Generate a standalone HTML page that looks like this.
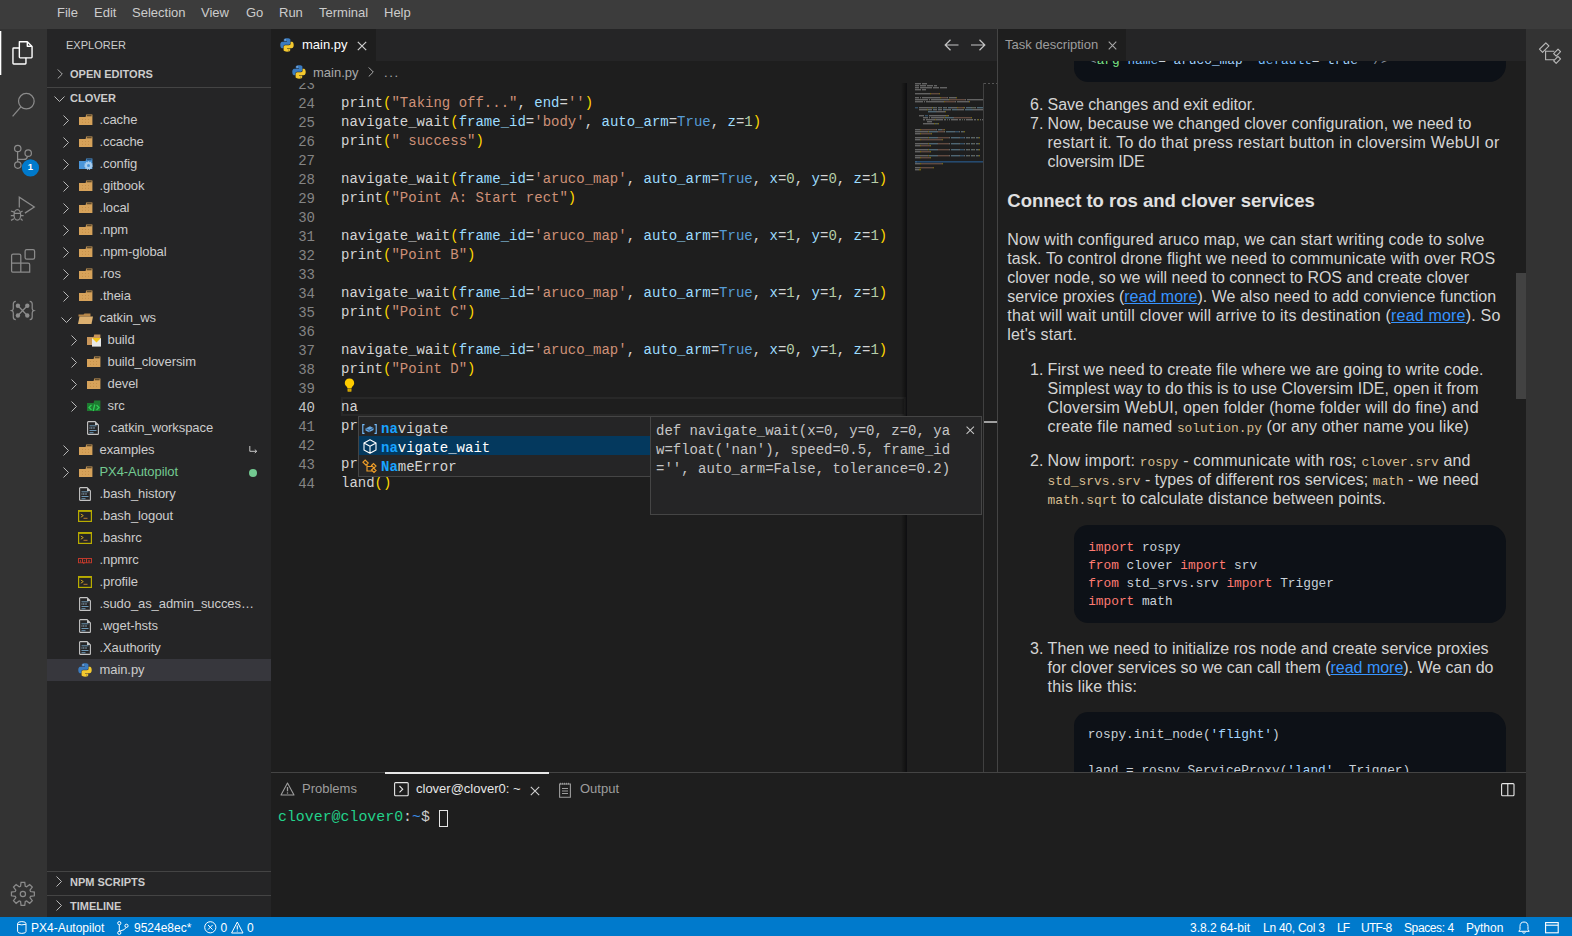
<!DOCTYPE html>
<html><head><meta charset="utf-8">
<style>
*{margin:0;padding:0;box-sizing:border-box}
html,body{width:1572px;height:936px;overflow:hidden;background:#1e1e1e;font-family:"Liberation Sans",sans-serif;color:#cccccc}
.a{position:absolute}
.mono{font-family:"Liberation Mono",monospace}
#menubar{left:0;top:0;width:1572px;height:29px;background:#3c3c3c}
#menubar span{position:absolute;top:5px;font-size:13px;color:#cccccc;line-height:16px}
#act{left:0;top:29px;width:47px;height:888px;background:#333333}
#side{left:47px;top:29px;width:224px;height:888px;background:#252526}
#editor{left:271px;top:29px;width:726px;height:743px;background:#1e1e1e}
#tabbar{left:271px;top:29px;width:726px;height:32px;background:#252526;overflow:hidden}
#rpanel{left:997px;top:29px;width:529px;height:743px;background:#1e1e1e;overflow:hidden}
#ract{left:1526px;top:29px;width:46px;height:888px;background:#333333}
#bottom{left:271px;top:772px;width:1255px;height:145px;background:#1e1e1e;border-top:1px solid #444}
#status{left:0;top:917px;width:1572px;height:19px;background:#007acc;color:#fff;font-size:12px}
.row{position:absolute;left:0;width:224px;height:22px;font-size:13px;line-height:22px;color:#cccccc;white-space:nowrap;letter-spacing:-0.08px}
.code{position:absolute;left:341px;margin-top:1px;font-size:14px;line-height:19px;white-space:pre;color:#d4d4d4;font-family:"Liberation Mono",monospace}
.ln{position:absolute;left:271px;margin-top:2px;width:44px;text-align:right;font-size:14px;line-height:19px;color:#858585;font-family:"Liberation Mono",monospace}
.s{color:#ce9178}.p{color:#9cdcfe}.k{color:#569cd6}.n{color:#b5cea8}.b{color:#ffd700}
.ml{position:absolute;white-space:pre;font-size:16px;line-height:19px;color:#d4d4d4}
.ml code{font-family:"Liberation Mono",monospace;font-size:12.9px;color:#d8bf92;letter-spacing:0}
.cb{background:#0d1117;border-radius:14px 17px 17px 14px}
.cbt{position:absolute;white-space:pre;font-family:"Liberation Mono",monospace;font-size:12.8px;line-height:18px;color:#c9d1d9}
.kw{color:#ff7b72}
</style></head><body>
<div id="menubar" class="a">
<span style="left:57px">File</span><span style="left:94px">Edit</span><span style="left:132px">Selection</span><span style="left:201px">View</span><span style="left:246px">Go</span><span style="left:279px">Run</span><span style="left:319px">Terminal</span><span style="left:384px">Help</span>
</div>
<div id="act" class="a"></div>
<svg class="a" style="left:0;top:0" width="47" height="936" viewBox="0 0 47 936" fill="none">
<rect x="0" y="31" width="1.3" height="44" fill="#ffffff"/>
<g stroke="#ffffff" stroke-width="1.4" stroke-linejoin="round">
<path d="M19.35,41.75 H27.3 L32.05,46.5 V57.1 Q32.05,57.85 31.3,57.85 H20.1 Q19.35,57.85 19.35,57.1 V42.5 Q19.35,41.75 20.1,41.75 Z"/>
<path d="M27.3,42 V46.3 H31.8" />
<path d="M19.35,47.95 H13.7 Q12.95,47.95 12.95,48.7 V63.2 Q12.95,63.95 13.7,63.95 H25.2 Q25.95,63.95 25.95,63.2 V57.85"/>
</g>
<g stroke="#8b8b8b" stroke-width="1.25">
<circle cx="26.35" cy="101.2" r="7.8"/>
<path d="M20.8,106.9 L12.6,116.3"/>
<circle cx="17.75" cy="148.5" r="3.2"/>
<circle cx="28.2" cy="153.15" r="3.2"/>
<circle cx="17.8" cy="165.1" r="3.2"/>
<path d="M17.6,151.7 V161.9 M17.6,159.4 H24 Q27,159.4 27.5,156.3"/>
<path d="M19.3,207.6 V197.2 L34.3,207.1 L24.9,213.1"/>
<ellipse cx="17.35" cy="214.9" rx="3.3" ry="5.2"/>
<path d="M14,213.3 H20.7 M11,211 L14.2,212.2 M22.6,211 L20.5,212.2 M10.8,215.6 H14 M20.7,215.6 H23.6 M11,220.4 L14,218.8 M22.6,220.4 L20.7,218.8"/>
<path d="M13.1,254.2 H19.2 Q20.8,254.2 20.8,255.8 V263.2 H28.1 Q29.7,263.2 29.7,264.8 V272 H12.6 Q11.6,272 11.6,271 V255.8 Q11.6,254.2 13.1,254.2 Z M11.6,263.2 H20.8 V272"/>
<rect x="25.1" y="249.6" width="9.5" height="9.5" rx="1.6"/>
<path d="M15.8,301.3 Q13.3,301.5 13.3,304 V308.5 Q13.3,310.2 11.7,310.7 Q13.3,311.2 13.3,313 V317 Q13.3,319.6 15.8,319.7 M29.7,301.3 Q32.2,301.5 32.2,304 V308.5 Q32.2,310.2 33.8,310.7 Q32.2,311.2 32.2,313 V317 Q32.2,319.6 29.7,319.7 M17.9,305.7 L27.3,315.5 M27.3,305.7 L17.9,315.5"/>
<path d="M20.54,886.26 L21.05,882.45 L24.75,882.45 L25.26,886.26 L26.63,886.82 L29.69,884.50 L32.30,887.11 L29.98,890.17 L30.54,891.54 L34.35,892.05 L34.35,895.75 L30.54,896.26 L29.98,897.63 L32.30,900.69 L29.69,903.30 L26.63,900.98 L25.26,901.54 L24.75,905.35 L21.05,905.35 L20.54,901.54 L19.17,900.98 L16.11,903.30 L13.50,900.69 L15.82,897.63 L15.26,896.26 L11.45,895.75 L11.45,892.05 L15.26,891.54 L15.82,890.17 L13.50,887.11 L16.11,884.50 L19.17,886.82 Z"/>
<circle cx="22.9" cy="893.9" r="2.6"/>
</g>
<g fill="#8b8b8b"><circle cx="17.9" cy="305.7" r="2.2"/><circle cx="27.3" cy="305.7" r="2.2"/><circle cx="17.9" cy="315.5" r="2.2"/><circle cx="27.3" cy="315.5" r="2.2"/></g>
<circle cx="30.45" cy="167.9" r="8.6" fill="#007acc"/>
</svg>
<div class="a" style="left:22px;top:161px;width:17px;text-align:center;font-size:9.5px;line-height:12px;font-weight:bold;color:#fff">1</div>
<svg width="0" height="0" style="position:absolute">
<defs>
<symbol id="i-folder" viewBox="0 0 14 11"><path d="M0,3 H6.6 L7.2,0.4 H13.4 V11 H0 Z" fill="#d6a25a"/><path d="M7.8,1.2 H12.6 V2.2 H7.6 Z" fill="#3a3020"/><g fill="#c08a45"><circle cx="3.5" cy="5.5" r=".5"/><circle cx="6.5" cy="5.5" r=".5"/><circle cx="9.5" cy="5.5" r=".5"/><circle cx="3.5" cy="8.3" r=".5"/><circle cx="6.5" cy="8.3" r=".5"/><circle cx="9.5" cy="8.3" r=".5"/></g></symbol>
<symbol id="i-folderopen" viewBox="0 0 15 11"><path d="M0.5,1.5 H5.5 L6.5,0.5 H12.5 V3.5 H0.5 Z" fill="#b8884a"/><path d="M0,11 L1.5,3.5 H15 L13.5,11 Z" fill="#dcb070"/></symbol>
<symbol id="i-file" viewBox="0 0 12 14"><path d="M1.3,0.6 H8 L11.4,4 V12.7 Q11.4,13.4 10.7,13.4 H1.3 Q0.6,13.4 0.6,12.7 V1.3 Q0.6,0.6 1.3,0.6 Z" fill="none" stroke="#c5c5c5" stroke-width="1.1"/><path d="M8,0.6 V4 H11.4" fill="#c5c5c5"/><g stroke="#6c96b4" stroke-width="1"><path d="M2.5,4.8 H9.5 M2.5,9.5 H9.5 M2.5,11.7 H6.5"/></g><path d="M2.5,7 H8" stroke="#7a8fa0" stroke-width="1.6" stroke-dasharray="1 .6"/></symbol>
<symbol id="i-shell" viewBox="0 0 14 12"><rect x="0.6" y="0.6" width="12.8" height="10.8" fill="none" stroke="#b8ac00" stroke-width="1.2"/><rect x="0.6" y="0.6" width="12.8" height="1.3" fill="#b8ac00"/><path d="M2.8,4 L5.3,5.6 L2.8,7.2" fill="none" stroke="#c9a020" stroke-width="1"/><path d="M5.5,8.3 H9.5" stroke="#b87a30" stroke-width="1"/></symbol>
<symbol id="i-npm" viewBox="0 0 14 6"><rect x="0" y="0" width="14" height="5.2" fill="#c0392b"/><g fill="#262626"><rect x="1" y="1" width="3" height="3.3"/><rect x="5" y="1" width="3" height="3.3"/><rect x="9" y="1" width="4" height="3.3"/></g><g fill="#c0392b"><rect x="2.1" y="1.9" width=".8" height="2.4"/><rect x="6.1" y="1.9" width=".8" height="1.5"/><rect x="10.1" y="1.9" width=".6" height="2.4"/><rect x="11.4" y="1.9" width=".6" height="2.4"/></g><rect x="5" y="4.2" width="1.5" height="1.5" fill="#c0392b"/></symbol>
<symbol id="i-py" viewBox="0 0 14 14"><path d="M6.9,0.3 C3.6,0.3 3.8,1.7 3.8,1.7 V3.3 H7 V3.8 H2.5 C2.5,3.8 0.3,3.5 0.3,7 C0.3,10.4 2.2,10.3 2.2,10.3 H3.4 V8.6 C3.4,8.6 3.3,6.7 5.3,6.7 H8.6 C8.6,6.7 10.4,6.7 10.4,4.9 V1.9 C10.4,1.9 10.7,0.3 6.9,0.3 Z" fill="#3b7bbf"/><path d="M7.1,13.7 C10.4,13.7 10.2,12.3 10.2,12.3 V10.7 H7 V10.2 H11.5 C11.5,10.2 13.7,10.5 13.7,7 C13.7,3.6 11.8,3.7 11.8,3.7 H10.6 V5.4 C10.6,5.4 10.7,7.3 8.7,7.3 H5.4 C5.4,7.3 3.6,7.3 3.6,9.1 V12.1 C3.6,12.1 3.3,13.7 7.1,13.7 Z" fill="#f4c92f"/><circle cx="5.2" cy="1.9" r=".6" fill="#bcd"/><circle cx="8.8" cy="12.1" r=".6" fill="#887030"/></symbol>
<symbol id="i-chev" viewBox="0 0 6 11"><path d="M0.5,0.5 L5.5,5.5 L0.5,10.5" fill="none" stroke="#c0c0c0" stroke-width="0.95"/></symbol>
<symbol id="i-chevd" viewBox="0 0 11 6"><path d="M0.5,0.5 L5.5,5.5 L10.5,0.5" fill="none" stroke="#c0c0c0" stroke-width="0.95"/></symbol>
</defs></svg>
<div id="side" class="a">
<div class="a" style="left:19px;top:10px;font-size:11px;line-height:13px;color:#cccccc">EXPLORER</div>
<svg class="a" style="left:9.6px;top:39.5px" width="6" height="10"><use href="#i-chev"/></svg>
<div class="a" style="left:23px;top:39px;font-size:11px;line-height:13px;font-weight:bold;color:#cccccc">OPEN EDITORS</div>
<div class="a" style="left:0;top:58px;width:224px;height:1px;background:#444444"></div>
<svg class="a" style="left:7px;top:66.5px" width="11" height="6"><use href="#i-chevd"/></svg>
<div class="a" style="left:23px;top:63px;font-size:11px;line-height:13px;font-weight:bold;color:#cccccc">CLOVER</div>
<div class="row" style="top:80px;"><svg class="a" style="left:16.299999999999997px;top:5.7px" width="6" height="11"><use href="#i-chev"/></svg><svg class="a" style="left:32px;top:5.3px" width="14" height="11"><use href="#i-folder"/></svg><span class="a" style="left:52.5px;top:0;color:#cccccc">.cache</span></div>
<div class="row" style="top:102px;"><svg class="a" style="left:16.299999999999997px;top:5.7px" width="6" height="11"><use href="#i-chev"/></svg><svg class="a" style="left:32px;top:5.3px" width="14" height="11"><use href="#i-folder"/></svg><span class="a" style="left:52.5px;top:0;color:#cccccc">.ccache</span></div>
<div class="row" style="top:124px;"><svg class="a" style="left:16.299999999999997px;top:5.7px" width="6" height="11"><use href="#i-chev"/></svg><svg class="a" style="left:32px;top:5px" width="15" height="12" viewBox="0 0 15 12"><path d="M0,3 H6.6 L7.2,0.4 H13.4 V11 H0 Z" fill="#4a95d8"/><path d="M7.8,1.2 H12.6 V2.2 H7.6 Z" fill="#1e3a5a"/><circle cx="9.5" cy="7.6" r="3.6" fill="#a8cdee" stroke="#a8cdee" stroke-width="1.4" stroke-dasharray="1 1"/><circle cx="9.5" cy="7.6" r="1.5" fill="#4a95d8"/></svg><span class="a" style="left:52.5px;top:0;color:#cccccc">.config</span></div>
<div class="row" style="top:146px;"><svg class="a" style="left:16.299999999999997px;top:5.7px" width="6" height="11"><use href="#i-chev"/></svg><svg class="a" style="left:32px;top:5.3px" width="14" height="11"><use href="#i-folder"/></svg><span class="a" style="left:52.5px;top:0;color:#cccccc">.gitbook</span></div>
<div class="row" style="top:168px;"><svg class="a" style="left:16.299999999999997px;top:5.7px" width="6" height="11"><use href="#i-chev"/></svg><svg class="a" style="left:32px;top:5.3px" width="14" height="11"><use href="#i-folder"/></svg><span class="a" style="left:52.5px;top:0;color:#cccccc">.local</span></div>
<div class="row" style="top:190px;"><svg class="a" style="left:16.299999999999997px;top:5.7px" width="6" height="11"><use href="#i-chev"/></svg><svg class="a" style="left:32px;top:5.3px" width="14" height="11"><use href="#i-folder"/></svg><span class="a" style="left:52.5px;top:0;color:#cccccc">.npm</span></div>
<div class="row" style="top:212px;"><svg class="a" style="left:16.299999999999997px;top:5.7px" width="6" height="11"><use href="#i-chev"/></svg><svg class="a" style="left:32px;top:5.3px" width="14" height="11"><use href="#i-folder"/></svg><span class="a" style="left:52.5px;top:0;color:#cccccc">.npm-global</span></div>
<div class="row" style="top:234px;"><svg class="a" style="left:16.299999999999997px;top:5.7px" width="6" height="11"><use href="#i-chev"/></svg><svg class="a" style="left:32px;top:5.3px" width="14" height="11"><use href="#i-folder"/></svg><span class="a" style="left:52.5px;top:0;color:#cccccc">.ros</span></div>
<div class="row" style="top:256px;"><svg class="a" style="left:16.299999999999997px;top:5.7px" width="6" height="11"><use href="#i-chev"/></svg><svg class="a" style="left:32px;top:5.3px" width="14" height="11"><use href="#i-folder"/></svg><span class="a" style="left:52.5px;top:0;color:#cccccc">.theia</span></div>
<div class="row" style="top:278px;"><svg class="a" style="left:13.8px;top:9.5px" width="11" height="6"><use href="#i-chevd"/></svg><svg class="a" style="left:30.5px;top:5.5px" width="15" height="11"><use href="#i-folderopen"/></svg><span class="a" style="left:52.5px;top:0;color:#cccccc">catkin_ws</span></div>
<div class="row" style="top:300px;"><svg class="a" style="left:24.299999999999997px;top:5.7px" width="6" height="11"><use href="#i-chev"/></svg><svg class="a" style="left:40px;top:4.5px" width="14" height="13" viewBox="0 0 14 13"><path d="M0,3 H6.6 L7.2,0.4 H13.4 V11 H0 Z" fill="#c9965a"/><path d="M5,4 H14 V12.6 H5 Z" fill="#e8e8e8"/><path d="M5,4 L9.5,8.5 L14,4 Z" fill="#f5c518"/></svg><span class="a" style="left:60.5px;top:0;color:#cccccc">build</span></div>
<div class="row" style="top:322px;"><svg class="a" style="left:24.299999999999997px;top:5.7px" width="6" height="11"><use href="#i-chev"/></svg><svg class="a" style="left:40px;top:5.3px" width="14" height="11"><use href="#i-folder"/></svg><span class="a" style="left:60.5px;top:0;color:#cccccc">build_cloversim</span></div>
<div class="row" style="top:344px;"><svg class="a" style="left:24.299999999999997px;top:5.7px" width="6" height="11"><use href="#i-chev"/></svg><svg class="a" style="left:40px;top:5.3px" width="14" height="11"><use href="#i-folder"/></svg><span class="a" style="left:60.5px;top:0;color:#cccccc">devel</span></div>
<div class="row" style="top:366px;"><svg class="a" style="left:24.299999999999997px;top:5.7px" width="6" height="11"><use href="#i-chev"/></svg><svg class="a" style="left:40px;top:5px" width="14" height="13" viewBox="0 0 14 13"><path d="M0,3 H6.6 L7.2,0.4 H13.4 V11 H0 Z" fill="#1e7a30"/><path d="M4.5,5 L2,7.5 L4.5,10 M9.5,5 L12,7.5 L9.5,10 M7.8,4.5 L6.2,11" fill="none" stroke="#2fcc55" stroke-width="1.3"/></svg><span class="a" style="left:60.5px;top:0;color:#cccccc">src</span></div>
<div class="row" style="top:388px;"><svg class="a" style="left:40px;top:4px" width="12" height="14"><use href="#i-file"/></svg><span class="a" style="left:60.5px;top:0;color:#cccccc">.catkin_workspace</span></div>
<div class="row" style="top:410px;"><svg class="a" style="left:16.299999999999997px;top:5.7px" width="6" height="11"><use href="#i-chev"/></svg><svg class="a" style="left:32px;top:5.3px" width="14" height="11"><use href="#i-folder"/></svg><span class="a" style="left:52.5px;top:0;color:#cccccc">examples</span><svg class="a" style="left:202px;top:7px" width="9" height="8" viewBox="0 0 9 8"><path d="M0.8,0 V5.3 H7.5 M5.8,3.6 L7.8,5.3 L5.8,7" fill="none" stroke="#c5c5c5" stroke-width="1"/></svg></div>
<div class="row" style="top:432px;"><svg class="a" style="left:16.299999999999997px;top:5.7px" width="6" height="11"><use href="#i-chev"/></svg><svg class="a" style="left:32px;top:5.3px" width="14" height="11"><use href="#i-folder"/></svg><span class="a" style="left:52.5px;top:0;color:#73c991">PX4-Autopilot</span><div class="a" style="left:201.6px;top:7.7px;width:8.4px;height:8.4px;border-radius:50%;background:#73c991"></div></div>
<div class="row" style="top:454px;"><svg class="a" style="left:32px;top:4px" width="12" height="14"><use href="#i-file"/></svg><span class="a" style="left:52.5px;top:0;color:#cccccc">.bash_history</span></div>
<div class="row" style="top:476px;"><svg class="a" style="left:31px;top:5.2px" width="14" height="12"><use href="#i-shell"/></svg><span class="a" style="left:52.5px;top:0;color:#cccccc">.bash_logout</span></div>
<div class="row" style="top:498px;"><svg class="a" style="left:31px;top:5.2px" width="14" height="12"><use href="#i-shell"/></svg><span class="a" style="left:52.5px;top:0;color:#cccccc">.bashrc</span></div>
<div class="row" style="top:520px;"><svg class="a" style="left:31px;top:8.7px" width="14" height="6"><use href="#i-npm"/></svg><span class="a" style="left:52.5px;top:0;color:#cccccc">.npmrc</span></div>
<div class="row" style="top:542px;"><svg class="a" style="left:31px;top:5.2px" width="14" height="12"><use href="#i-shell"/></svg><span class="a" style="left:52.5px;top:0;color:#cccccc">.profile</span></div>
<div class="row" style="top:564px;"><svg class="a" style="left:32px;top:4px" width="12" height="14"><use href="#i-file"/></svg><span class="a" style="left:52.5px;top:0;color:#cccccc">.sudo_as_admin_succes…</span></div>
<div class="row" style="top:586px;"><svg class="a" style="left:32px;top:4px" width="12" height="14"><use href="#i-file"/></svg><span class="a" style="left:52.5px;top:0;color:#cccccc">.wget-hsts</span></div>
<div class="row" style="top:608px;"><svg class="a" style="left:32px;top:4px" width="12" height="14"><use href="#i-file"/></svg><span class="a" style="left:52.5px;top:0;color:#cccccc">.Xauthority</span></div>
<div class="row" style="top:630px;background:#37373d;"><svg class="a" style="left:31px;top:4px" width="14" height="14"><use href="#i-py"/></svg><span class="a" style="left:52.5px;top:0;color:#cccccc">main.py</span></div>
<div class="a" style="left:0;top:842px;width:224px;height:1px;background:#444444"></div>
<svg class="a" style="left:9.3px;top:847px" width="6" height="11"><use href="#i-chev"/></svg>
<div class="a" style="left:23px;top:847px;font-size:11px;line-height:13px;font-weight:bold;color:#cccccc">NPM SCRIPTS</div>
<div class="a" style="left:0;top:866px;width:224px;height:1px;background:#444444"></div>
<svg class="a" style="left:9.3px;top:871px" width="6" height="11"><use href="#i-chev"/></svg>
<div class="a" style="left:23px;top:871px;font-size:11px;line-height:13px;font-weight:bold;color:#cccccc">TIMELINE</div>
</div>
<div id="editor" class="a"></div>
<div id="tabbar" class="a">
<div class="a" style="left:0;top:0;width:105px;height:32px;background:#1e1e1e"></div>
<svg class="a" style="left:9px;top:9px" width="14" height="14"><use href="#i-py"/></svg>
<span class="a" style="left:31px;top:8px;font-size:13px;line-height:16px;color:#ffffff">main.py</span>
<svg class="a" style="left:85.5px;top:11.7px" width="10" height="10" viewBox="0 0 10 10"><path d="M0.8,0.8 L9.2,9.2 M9.2,0.8 L0.8,9.2" stroke="#d0d0d0" stroke-width="1.2"/></svg>
<svg class="a" style="left:673px;top:10px" width="16" height="12" viewBox="0 0 16 12"><path d="M1,6 H14.5 M6.5,0.8 L1.2,6 L6.5,11.2" fill="none" stroke="#c5c5c5" stroke-width="1.2"/></svg>
<svg class="a" style="left:699px;top:10px" width="16" height="12" viewBox="0 0 16 12"><path d="M1,6 H14.5 M9.5,0.8 L14.8,6 L9.5,11.2" fill="none" stroke="#c5c5c5" stroke-width="1.2"/></svg>
</div>
<div class="a" style="left:271px;top:61px;width:726px;height:22px;background:#1e1e1e">
<svg class="a" style="left:21px;top:4px" width="14" height="14"><use href="#i-py"/></svg>
<span class="a" style="left:42px;top:4px;font-size:13px;line-height:16px;color:#a9a9a9">main.py</span>
<svg class="a" style="left:97px;top:6px" width="6" height="10"><use href="#i-chev"/></svg>
<span class="a" style="left:113px;top:4px;font-size:13px;line-height:16px;color:#a9a9a9;letter-spacing:1.6px">...</span>
</div>
<div class="a" style="left:0;top:83px;width:997px;height:689px;overflow:hidden">
<div class="a" style="left:341px;top:314px;width:565px;height:19px;border:2px solid #282828"></div>
<div class="ln" style="top:-9px">23</div>
<div class="ln" style="top:10px">24</div>
<div class="code" style="top:10px">print<span class="b">(</span><span class="s">&quot;Taking off...&quot;</span>, <span class="p">end</span>=<span class="s">&#x27;&#x27;</span><span class="b">)</span></div>
<div class="ln" style="top:29px">25</div>
<div class="code" style="top:29px">navigate_wait<span class="b">(</span><span class="p">frame_id</span>=<span class="s">&#x27;body&#x27;</span>, <span class="p">auto_arm</span>=<span class="k">True</span>, <span class="p">z</span>=<span class="n">1</span><span class="b">)</span></div>
<div class="ln" style="top:48px">26</div>
<div class="code" style="top:48px">print<span class="b">(</span><span class="s">&quot; success&quot;</span><span class="b">)</span></div>
<div class="ln" style="top:67px">27</div>
<div class="ln" style="top:86px">28</div>
<div class="code" style="top:86px">navigate_wait<span class="b">(</span><span class="p">frame_id</span>=<span class="s">&#x27;aruco_map&#x27;</span>, <span class="p">auto_arm</span>=<span class="k">True</span>, <span class="p">x</span>=<span class="n">0</span>, <span class="p">y</span>=<span class="n">0</span>, <span class="p">z</span>=<span class="n">1</span><span class="b">)</span></div>
<div class="ln" style="top:105px">29</div>
<div class="code" style="top:105px">print<span class="b">(</span><span class="s">&quot;Point A: Start rect&quot;</span><span class="b">)</span></div>
<div class="ln" style="top:124px">30</div>
<div class="ln" style="top:143px">31</div>
<div class="code" style="top:143px">navigate_wait<span class="b">(</span><span class="p">frame_id</span>=<span class="s">&#x27;aruco_map&#x27;</span>, <span class="p">auto_arm</span>=<span class="k">True</span>, <span class="p">x</span>=<span class="n">1</span>, <span class="p">y</span>=<span class="n">0</span>, <span class="p">z</span>=<span class="n">1</span><span class="b">)</span></div>
<div class="ln" style="top:162px">32</div>
<div class="code" style="top:162px">print<span class="b">(</span><span class="s">&quot;Point B&quot;</span><span class="b">)</span></div>
<div class="ln" style="top:181px">33</div>
<div class="ln" style="top:200px">34</div>
<div class="code" style="top:200px">navigate_wait<span class="b">(</span><span class="p">frame_id</span>=<span class="s">&#x27;aruco_map&#x27;</span>, <span class="p">auto_arm</span>=<span class="k">True</span>, <span class="p">x</span>=<span class="n">1</span>, <span class="p">y</span>=<span class="n">1</span>, <span class="p">z</span>=<span class="n">1</span><span class="b">)</span></div>
<div class="ln" style="top:219px">35</div>
<div class="code" style="top:219px">print<span class="b">(</span><span class="s">&quot;Point C&quot;</span><span class="b">)</span></div>
<div class="ln" style="top:238px">36</div>
<div class="ln" style="top:257px">37</div>
<div class="code" style="top:257px">navigate_wait<span class="b">(</span><span class="p">frame_id</span>=<span class="s">&#x27;aruco_map&#x27;</span>, <span class="p">auto_arm</span>=<span class="k">True</span>, <span class="p">x</span>=<span class="n">0</span>, <span class="p">y</span>=<span class="n">1</span>, <span class="p">z</span>=<span class="n">1</span><span class="b">)</span></div>
<div class="ln" style="top:276px">38</div>
<div class="code" style="top:276px">print<span class="b">(</span><span class="s">&quot;Point D&quot;</span><span class="b">)</span></div>
<div class="ln" style="top:295px">39</div>
<div class="ln" style="top:314px;color:#c6c6c6">40</div>
<div class="code" style="top:314px">na</div>
<div class="ln" style="top:333px">41</div>
<div class="code" style="top:333px">pr</div>
<div class="ln" style="top:352px">42</div>
<div class="ln" style="top:371px">43</div>
<div class="code" style="top:371px">pr</div>
<div class="ln" style="top:390px">44</div>
<div class="code" style="top:390px">land<span class="b">(</span><span class="b">)</span></div>
</div>


<!-- minimap -->
<div class="a" style="left:906px;top:83px;width:1px;height:689px;background:#0f0f12"></div>
<div class="a" style="left:901px;top:83px;width:5px;height:689px;background:linear-gradient(to right,rgba(0,0,0,0),rgba(0,0,0,.45))"></div>
<svg class="a" style="left:0;top:0" width="1000" height="200" viewBox="0 0 1000 200"><g opacity="0.38"><rect x="915" y="83" width="6" height="1.4" fill="#d4d4d4"/><rect x="922" y="83" width="5" height="1.4" fill="#d4d4d4"/><rect x="915" y="85" width="4" height="1.4" fill="#d4d4d4"/><rect x="920" y="85" width="6" height="1.4" fill="#d4d4d4"/><rect x="927" y="85" width="6" height="1.4" fill="#d4d4d4"/><rect x="934" y="85" width="3" height="1.4" fill="#d4d4d4"/><rect x="915" y="87" width="4" height="1.4" fill="#d4d4d4"/><rect x="920" y="87" width="8" height="1.4" fill="#d4d4d4"/><rect x="928" y="87" width="1" height="1.4" fill="#d4d4d4"/><rect x="929" y="87" width="3" height="1.4" fill="#d4d4d4"/><rect x="933" y="87" width="6" height="1.4" fill="#d4d4d4"/><rect x="940" y="87" width="7" height="1.4" fill="#d4d4d4"/><rect x="915" y="89" width="6" height="1.4" fill="#d4d4d4"/><rect x="922" y="89" width="4" height="1.4" fill="#d4d4d4"/><rect x="915" y="93" width="5" height="1.4" fill="#d4d4d4"/><rect x="920" y="93" width="1" height="1.4" fill="#d4d4d4"/><rect x="921" y="93" width="9" height="1.4" fill="#d4d4d4"/><rect x="930" y="93" width="1" height="1.4" fill="#ffd700"/><rect x="931" y="93" width="8" height="1.4" fill="#ce9178"/><rect x="939" y="93" width="1" height="1.4" fill="#ffd700"/><rect x="915" y="97" width="4" height="1.4" fill="#d4d4d4"/><rect x="920" y="97" width="1" height="1.4" fill="#d4d4d4"/><rect x="922" y="97" width="5" height="1.4" fill="#d4d4d4"/><rect x="927" y="97" width="1" height="1.4" fill="#d4d4d4"/><rect x="928" y="97" width="12" height="1.4" fill="#d4d4d4"/><rect x="940" y="97" width="1" height="1.4" fill="#ffd700"/><rect x="941" y="97" width="6" height="1.4" fill="#ce9178"/><rect x="947" y="97" width="1" height="1.4" fill="#d4d4d4"/><rect x="949" y="97" width="7" height="1.4" fill="#d4d4d4"/><rect x="956" y="97" width="1" height="1.4" fill="#ffd700"/><rect x="915" y="99" width="13" height="1.4" fill="#d4d4d4"/><rect x="929" y="99" width="1" height="1.4" fill="#d4d4d4"/><rect x="931" y="99" width="5" height="1.4" fill="#d4d4d4"/><rect x="936" y="99" width="1" height="1.4" fill="#d4d4d4"/><rect x="937" y="99" width="12" height="1.4" fill="#d4d4d4"/><rect x="949" y="99" width="1" height="1.4" fill="#ffd700"/><rect x="950" y="99" width="15" height="1.4" fill="#ce9178"/><rect x="965" y="99" width="1" height="1.4" fill="#d4d4d4"/><rect x="967" y="99" width="3" height="1.4" fill="#d4d4d4"/><rect x="970" y="99" width="1" height="1.4" fill="#d4d4d4"/><rect x="971" y="99" width="12" height="1.4" fill="#d4d4d4"/><rect x="915" y="101" width="8" height="1.4" fill="#d4d4d4"/><rect x="924" y="101" width="1" height="1.4" fill="#d4d4d4"/><rect x="926" y="101" width="5" height="1.4" fill="#d4d4d4"/><rect x="931" y="101" width="1" height="1.4" fill="#d4d4d4"/><rect x="932" y="101" width="12" height="1.4" fill="#d4d4d4"/><rect x="944" y="101" width="1" height="1.4" fill="#ffd700"/><rect x="945" y="101" width="10" height="1.4" fill="#ce9178"/><rect x="955" y="101" width="1" height="1.4" fill="#d4d4d4"/><rect x="957" y="101" width="3" height="1.4" fill="#d4d4d4"/><rect x="960" y="101" width="1" height="1.4" fill="#d4d4d4"/><rect x="961" y="101" width="8" height="1.4" fill="#d4d4d4"/><rect x="969" y="101" width="1" height="1.4" fill="#ffd700"/><rect x="915" y="107" width="3" height="1.4" fill="#569cd6"/><rect x="919" y="107" width="13" height="1.4" fill="#d4d4d4"/><rect x="932" y="107" width="1" height="1.4" fill="#ffd700"/><rect x="933" y="107" width="1" height="1.4" fill="#9cdcfe"/><rect x="934" y="107" width="1" height="1.4" fill="#d4d4d4"/><rect x="935" y="107" width="1" height="1.4" fill="#b5cea8"/><rect x="936" y="107" width="1" height="1.4" fill="#d4d4d4"/><rect x="938" y="107" width="1" height="1.4" fill="#9cdcfe"/><rect x="939" y="107" width="1" height="1.4" fill="#d4d4d4"/><rect x="940" y="107" width="1" height="1.4" fill="#b5cea8"/><rect x="941" y="107" width="1" height="1.4" fill="#d4d4d4"/><rect x="943" y="107" width="1" height="1.4" fill="#9cdcfe"/><rect x="944" y="107" width="1" height="1.4" fill="#d4d4d4"/><rect x="945" y="107" width="1" height="1.4" fill="#b5cea8"/><rect x="946" y="107" width="1" height="1.4" fill="#d4d4d4"/><rect x="948" y="107" width="3" height="1.4" fill="#9cdcfe"/><rect x="951" y="107" width="1" height="1.4" fill="#d4d4d4"/><rect x="952" y="107" width="5" height="1.4" fill="#d4d4d4"/><rect x="957" y="107" width="1" height="1.4" fill="#ffd700"/><rect x="958" y="107" width="5" height="1.4" fill="#ce9178"/><rect x="963" y="107" width="1" height="1.4" fill="#ffd700"/><rect x="964" y="107" width="1" height="1.4" fill="#d4d4d4"/><rect x="966" y="107" width="5" height="1.4" fill="#9cdcfe"/><rect x="971" y="107" width="1" height="1.4" fill="#d4d4d4"/><rect x="972" y="107" width="3" height="1.4" fill="#b5cea8"/><rect x="975" y="107" width="1" height="1.4" fill="#d4d4d4"/><rect x="977" y="107" width="6" height="1.4" fill="#9cdcfe"/><rect x="919" y="109" width="8" height="1.4" fill="#d4d4d4"/><rect x="927" y="109" width="1" height="1.4" fill="#ffd700"/><rect x="928" y="109" width="1" height="1.4" fill="#9cdcfe"/><rect x="929" y="109" width="1" height="1.4" fill="#d4d4d4"/><rect x="930" y="109" width="1" height="1.4" fill="#d4d4d4"/><rect x="931" y="109" width="1" height="1.4" fill="#d4d4d4"/><rect x="933" y="109" width="1" height="1.4" fill="#9cdcfe"/><rect x="934" y="109" width="1" height="1.4" fill="#d4d4d4"/><rect x="935" y="109" width="1" height="1.4" fill="#d4d4d4"/><rect x="936" y="109" width="1" height="1.4" fill="#d4d4d4"/><rect x="938" y="109" width="1" height="1.4" fill="#9cdcfe"/><rect x="939" y="109" width="1" height="1.4" fill="#d4d4d4"/><rect x="940" y="109" width="1" height="1.4" fill="#d4d4d4"/><rect x="941" y="109" width="1" height="1.4" fill="#d4d4d4"/><rect x="943" y="109" width="3" height="1.4" fill="#9cdcfe"/><rect x="946" y="109" width="1" height="1.4" fill="#d4d4d4"/><rect x="947" y="109" width="3" height="1.4" fill="#d4d4d4"/><rect x="950" y="109" width="1" height="1.4" fill="#d4d4d4"/><rect x="952" y="109" width="5" height="1.4" fill="#9cdcfe"/><rect x="957" y="109" width="1" height="1.4" fill="#d4d4d4"/><rect x="958" y="109" width="5" height="1.4" fill="#d4d4d4"/><rect x="963" y="109" width="1" height="1.4" fill="#d4d4d4"/><rect x="965" y="109" width="8" height="1.4" fill="#9cdcfe"/><rect x="973" y="109" width="1" height="1.4" fill="#d4d4d4"/><rect x="974" y="109" width="8" height="1.4" fill="#d4d4d4"/><rect x="982" y="109" width="1" height="1.4" fill="#d4d4d4"/><rect x="928" y="111" width="8" height="1.4" fill="#9cdcfe"/><rect x="936" y="111" width="1" height="1.4" fill="#d4d4d4"/><rect x="937" y="111" width="8" height="1.4" fill="#d4d4d4"/><rect x="945" y="111" width="1" height="1.4" fill="#ffd700"/><rect x="919" y="115" width="5" height="1.4" fill="#d4d4d4"/><rect x="925" y="115" width="3" height="1.4" fill="#569cd6"/><rect x="929" y="115" width="5" height="1.4" fill="#d4d4d4"/><rect x="934" y="115" width="1" height="1.4" fill="#d4d4d4"/><rect x="935" y="115" width="11" height="1.4" fill="#d4d4d4"/><rect x="946" y="115" width="1" height="1.4" fill="#ffd700"/><rect x="947" y="115" width="1" height="1.4" fill="#ffd700"/><rect x="948" y="115" width="1" height="1.4" fill="#d4d4d4"/><rect x="923" y="117" width="5" height="1.4" fill="#d4d4d4"/><rect x="929" y="117" width="1" height="1.4" fill="#d4d4d4"/><rect x="931" y="117" width="13" height="1.4" fill="#d4d4d4"/><rect x="944" y="117" width="1" height="1.4" fill="#ffd700"/><rect x="945" y="117" width="8" height="1.4" fill="#9cdcfe"/><rect x="953" y="117" width="1" height="1.4" fill="#d4d4d4"/><rect x="954" y="117" width="17" height="1.4" fill="#ce9178"/><rect x="971" y="117" width="1" height="1.4" fill="#ffd700"/><rect x="923" y="119" width="2" height="1.4" fill="#d4d4d4"/><rect x="926" y="119" width="4" height="1.4" fill="#d4d4d4"/><rect x="930" y="119" width="1" height="1.4" fill="#d4d4d4"/><rect x="931" y="119" width="4" height="1.4" fill="#d4d4d4"/><rect x="935" y="119" width="1" height="1.4" fill="#ffd700"/><rect x="936" y="119" width="5" height="1.4" fill="#d4d4d4"/><rect x="941" y="119" width="1" height="1.4" fill="#d4d4d4"/><rect x="942" y="119" width="1" height="1.4" fill="#d4d4d4"/><rect x="944" y="119" width="1" height="1.4" fill="#d4d4d4"/><rect x="945" y="119" width="1" height="1.4" fill="#d4d4d4"/><rect x="947" y="119" width="1" height="1.4" fill="#b5cea8"/><rect x="949" y="119" width="1" height="1.4" fill="#d4d4d4"/><rect x="951" y="119" width="5" height="1.4" fill="#d4d4d4"/><rect x="956" y="119" width="1" height="1.4" fill="#d4d4d4"/><rect x="957" y="119" width="1" height="1.4" fill="#d4d4d4"/><rect x="959" y="119" width="1" height="1.4" fill="#d4d4d4"/><rect x="960" y="119" width="1" height="1.4" fill="#d4d4d4"/><rect x="962" y="119" width="1" height="1.4" fill="#b5cea8"/><rect x="964" y="119" width="1" height="1.4" fill="#d4d4d4"/><rect x="966" y="119" width="5" height="1.4" fill="#d4d4d4"/><rect x="971" y="119" width="1" height="1.4" fill="#d4d4d4"/><rect x="972" y="119" width="1" height="1.4" fill="#d4d4d4"/><rect x="974" y="119" width="1" height="1.4" fill="#d4d4d4"/><rect x="975" y="119" width="1" height="1.4" fill="#d4d4d4"/><rect x="977" y="119" width="1" height="1.4" fill="#b5cea8"/><rect x="978" y="119" width="1" height="1.4" fill="#ffd700"/><rect x="980" y="119" width="1" height="1.4" fill="#d4d4d4"/><rect x="982" y="119" width="1" height="1.4" fill="#d4d4d4"/><rect x="927" y="121" width="5" height="1.4" fill="#d4d4d4"/><rect x="923" y="123" width="5" height="1.4" fill="#d4d4d4"/><rect x="928" y="123" width="1" height="1.4" fill="#d4d4d4"/><rect x="929" y="123" width="5" height="1.4" fill="#d4d4d4"/><rect x="934" y="123" width="1" height="1.4" fill="#ffd700"/><rect x="935" y="123" width="3" height="1.4" fill="#b5cea8"/><rect x="938" y="123" width="1" height="1.4" fill="#ffd700"/><rect x="915" y="129" width="5" height="1.4" fill="#d4d4d4"/><rect x="920" y="129" width="1" height="1.4" fill="#ffd700"/><rect x="921" y="129" width="15" height="1.4" fill="#ce9178"/><rect x="936" y="129" width="1" height="1.4" fill="#d4d4d4"/><rect x="938" y="129" width="3" height="1.4" fill="#9cdcfe"/><rect x="941" y="129" width="1" height="1.4" fill="#d4d4d4"/><rect x="942" y="129" width="2" height="1.4" fill="#ce9178"/><rect x="944" y="129" width="1" height="1.4" fill="#ffd700"/><rect x="915" y="131" width="13" height="1.4" fill="#d4d4d4"/><rect x="928" y="131" width="1" height="1.4" fill="#ffd700"/><rect x="929" y="131" width="8" height="1.4" fill="#9cdcfe"/><rect x="937" y="131" width="1" height="1.4" fill="#d4d4d4"/><rect x="938" y="131" width="6" height="1.4" fill="#ce9178"/><rect x="944" y="131" width="1" height="1.4" fill="#d4d4d4"/><rect x="946" y="131" width="8" height="1.4" fill="#9cdcfe"/><rect x="954" y="131" width="1" height="1.4" fill="#d4d4d4"/><rect x="955" y="131" width="4" height="1.4" fill="#569cd6"/><rect x="959" y="131" width="1" height="1.4" fill="#d4d4d4"/><rect x="961" y="131" width="1" height="1.4" fill="#9cdcfe"/><rect x="962" y="131" width="1" height="1.4" fill="#d4d4d4"/><rect x="963" y="131" width="1" height="1.4" fill="#b5cea8"/><rect x="964" y="131" width="1" height="1.4" fill="#ffd700"/><rect x="915" y="133" width="5" height="1.4" fill="#d4d4d4"/><rect x="920" y="133" width="1" height="1.4" fill="#ffd700"/><rect x="921" y="133" width="10" height="1.4" fill="#ce9178"/><rect x="931" y="133" width="1" height="1.4" fill="#ffd700"/><rect x="915" y="137" width="13" height="1.4" fill="#d4d4d4"/><rect x="928" y="137" width="1" height="1.4" fill="#ffd700"/><rect x="929" y="137" width="8" height="1.4" fill="#9cdcfe"/><rect x="937" y="137" width="1" height="1.4" fill="#d4d4d4"/><rect x="938" y="137" width="11" height="1.4" fill="#ce9178"/><rect x="949" y="137" width="1" height="1.4" fill="#d4d4d4"/><rect x="951" y="137" width="8" height="1.4" fill="#9cdcfe"/><rect x="959" y="137" width="1" height="1.4" fill="#d4d4d4"/><rect x="960" y="137" width="4" height="1.4" fill="#569cd6"/><rect x="964" y="137" width="1" height="1.4" fill="#d4d4d4"/><rect x="966" y="137" width="1" height="1.4" fill="#9cdcfe"/><rect x="967" y="137" width="1" height="1.4" fill="#d4d4d4"/><rect x="968" y="137" width="1" height="1.4" fill="#b5cea8"/><rect x="969" y="137" width="1" height="1.4" fill="#d4d4d4"/><rect x="971" y="137" width="1" height="1.4" fill="#9cdcfe"/><rect x="972" y="137" width="1" height="1.4" fill="#d4d4d4"/><rect x="973" y="137" width="1" height="1.4" fill="#b5cea8"/><rect x="974" y="137" width="1" height="1.4" fill="#d4d4d4"/><rect x="976" y="137" width="1" height="1.4" fill="#9cdcfe"/><rect x="977" y="137" width="1" height="1.4" fill="#d4d4d4"/><rect x="978" y="137" width="1" height="1.4" fill="#b5cea8"/><rect x="979" y="137" width="1" height="1.4" fill="#ffd700"/><rect x="915" y="139" width="5" height="1.4" fill="#d4d4d4"/><rect x="920" y="139" width="1" height="1.4" fill="#ffd700"/><rect x="921" y="139" width="21" height="1.4" fill="#ce9178"/><rect x="942" y="139" width="1" height="1.4" fill="#ffd700"/><rect x="915" y="143" width="13" height="1.4" fill="#d4d4d4"/><rect x="928" y="143" width="1" height="1.4" fill="#ffd700"/><rect x="929" y="143" width="8" height="1.4" fill="#9cdcfe"/><rect x="937" y="143" width="1" height="1.4" fill="#d4d4d4"/><rect x="938" y="143" width="11" height="1.4" fill="#ce9178"/><rect x="949" y="143" width="1" height="1.4" fill="#d4d4d4"/><rect x="951" y="143" width="8" height="1.4" fill="#9cdcfe"/><rect x="959" y="143" width="1" height="1.4" fill="#d4d4d4"/><rect x="960" y="143" width="4" height="1.4" fill="#569cd6"/><rect x="964" y="143" width="1" height="1.4" fill="#d4d4d4"/><rect x="966" y="143" width="1" height="1.4" fill="#9cdcfe"/><rect x="967" y="143" width="1" height="1.4" fill="#d4d4d4"/><rect x="968" y="143" width="1" height="1.4" fill="#b5cea8"/><rect x="969" y="143" width="1" height="1.4" fill="#d4d4d4"/><rect x="971" y="143" width="1" height="1.4" fill="#9cdcfe"/><rect x="972" y="143" width="1" height="1.4" fill="#d4d4d4"/><rect x="973" y="143" width="1" height="1.4" fill="#b5cea8"/><rect x="974" y="143" width="1" height="1.4" fill="#d4d4d4"/><rect x="976" y="143" width="1" height="1.4" fill="#9cdcfe"/><rect x="977" y="143" width="1" height="1.4" fill="#d4d4d4"/><rect x="978" y="143" width="1" height="1.4" fill="#b5cea8"/><rect x="979" y="143" width="1" height="1.4" fill="#ffd700"/><rect x="915" y="145" width="5" height="1.4" fill="#d4d4d4"/><rect x="920" y="145" width="1" height="1.4" fill="#ffd700"/><rect x="921" y="145" width="9" height="1.4" fill="#ce9178"/><rect x="930" y="145" width="1" height="1.4" fill="#ffd700"/><rect x="915" y="149" width="13" height="1.4" fill="#d4d4d4"/><rect x="928" y="149" width="1" height="1.4" fill="#ffd700"/><rect x="929" y="149" width="8" height="1.4" fill="#9cdcfe"/><rect x="937" y="149" width="1" height="1.4" fill="#d4d4d4"/><rect x="938" y="149" width="11" height="1.4" fill="#ce9178"/><rect x="949" y="149" width="1" height="1.4" fill="#d4d4d4"/><rect x="951" y="149" width="8" height="1.4" fill="#9cdcfe"/><rect x="959" y="149" width="1" height="1.4" fill="#d4d4d4"/><rect x="960" y="149" width="4" height="1.4" fill="#569cd6"/><rect x="964" y="149" width="1" height="1.4" fill="#d4d4d4"/><rect x="966" y="149" width="1" height="1.4" fill="#9cdcfe"/><rect x="967" y="149" width="1" height="1.4" fill="#d4d4d4"/><rect x="968" y="149" width="1" height="1.4" fill="#b5cea8"/><rect x="969" y="149" width="1" height="1.4" fill="#d4d4d4"/><rect x="971" y="149" width="1" height="1.4" fill="#9cdcfe"/><rect x="972" y="149" width="1" height="1.4" fill="#d4d4d4"/><rect x="973" y="149" width="1" height="1.4" fill="#b5cea8"/><rect x="974" y="149" width="1" height="1.4" fill="#d4d4d4"/><rect x="976" y="149" width="1" height="1.4" fill="#9cdcfe"/><rect x="977" y="149" width="1" height="1.4" fill="#d4d4d4"/><rect x="978" y="149" width="1" height="1.4" fill="#b5cea8"/><rect x="979" y="149" width="1" height="1.4" fill="#ffd700"/><rect x="915" y="151" width="5" height="1.4" fill="#d4d4d4"/><rect x="920" y="151" width="1" height="1.4" fill="#ffd700"/><rect x="921" y="151" width="9" height="1.4" fill="#ce9178"/><rect x="930" y="151" width="1" height="1.4" fill="#ffd700"/><rect x="915" y="155" width="13" height="1.4" fill="#d4d4d4"/><rect x="928" y="155" width="1" height="1.4" fill="#ffd700"/><rect x="929" y="155" width="8" height="1.4" fill="#9cdcfe"/><rect x="937" y="155" width="1" height="1.4" fill="#d4d4d4"/><rect x="938" y="155" width="11" height="1.4" fill="#ce9178"/><rect x="949" y="155" width="1" height="1.4" fill="#d4d4d4"/><rect x="951" y="155" width="8" height="1.4" fill="#9cdcfe"/><rect x="959" y="155" width="1" height="1.4" fill="#d4d4d4"/><rect x="960" y="155" width="4" height="1.4" fill="#569cd6"/><rect x="964" y="155" width="1" height="1.4" fill="#d4d4d4"/><rect x="966" y="155" width="1" height="1.4" fill="#9cdcfe"/><rect x="967" y="155" width="1" height="1.4" fill="#d4d4d4"/><rect x="968" y="155" width="1" height="1.4" fill="#b5cea8"/><rect x="969" y="155" width="1" height="1.4" fill="#d4d4d4"/><rect x="971" y="155" width="1" height="1.4" fill="#9cdcfe"/><rect x="972" y="155" width="1" height="1.4" fill="#d4d4d4"/><rect x="973" y="155" width="1" height="1.4" fill="#b5cea8"/><rect x="974" y="155" width="1" height="1.4" fill="#d4d4d4"/><rect x="976" y="155" width="1" height="1.4" fill="#9cdcfe"/><rect x="977" y="155" width="1" height="1.4" fill="#d4d4d4"/><rect x="978" y="155" width="1" height="1.4" fill="#b5cea8"/><rect x="979" y="155" width="1" height="1.4" fill="#ffd700"/><rect x="915" y="157" width="5" height="1.4" fill="#d4d4d4"/><rect x="920" y="157" width="1" height="1.4" fill="#ffd700"/><rect x="921" y="157" width="9" height="1.4" fill="#ce9178"/><rect x="930" y="157" width="1" height="1.4" fill="#ffd700"/><rect x="915" y="161" width="2" height="1.4" fill="#d4d4d4"/><rect x="915" y="163" width="5" height="1.4" fill="#d4d4d4"/><rect x="920" y="163" width="1" height="1.4" fill="#ffd700"/><rect x="921" y="163" width="21" height="1.4" fill="#ce9178"/><rect x="942" y="163" width="1" height="1.4" fill="#ffd700"/><rect x="915" y="167" width="5" height="1.4" fill="#d4d4d4"/><rect x="920" y="167" width="1" height="1.4" fill="#ffd700"/><rect x="921" y="167" width="12" height="1.4" fill="#ce9178"/><rect x="933" y="167" width="1" height="1.4" fill="#ffd700"/><rect x="915" y="169" width="4" height="1.4" fill="#d4d4d4"/><rect x="919" y="169" width="1" height="1.4" fill="#ffd700"/><rect x="920" y="169" width="1" height="1.4" fill="#ffd700"/></g><rect x="915" y="161" width="68" height="1.6" fill="#2a5a8a" opacity=".75"/></svg>
<div class="a" style="left:983px;top:83px;width:1px;height:689px;background:#404040"></div>
<div class="a" style="left:984px;top:83px;width:13px;height:1px;background:repeating-linear-gradient(to right,#555 0 2px,transparent 2px 4px)"></div>
<div class="a" style="left:984px;top:421px;width:13px;height:2px;background:#a0a0a0"></div>
<!-- lightbulb -->
<svg class="a" style="left:344px;top:378px" width="11" height="14" viewBox="0 0 11 14"><path d="M5.5,0.6 C2.6,0.6 0.8,2.6 0.8,5 C0.8,6.8 1.9,7.8 2.8,8.8 C3.3,9.4 3.5,10 3.5,10.6 H7.5 C7.5,10 7.7,9.4 8.2,8.8 C9.1,7.8 10.2,6.8 10.2,5 C10.2,2.6 8.4,0.6 5.5,0.6 Z" fill="#ffcc00"/><rect x="3.6" y="11" width="3.8" height="2.6" fill="#ffcc00"/><rect x="4.3" y="11.6" width="2.4" height="0.8" fill="#6b5400"/></svg>
<!-- suggest widget -->
<div class="a" style="left:358px;top:416px;width:293px;height:61px;background:#252526;border:1px solid #454545;border-right:none;overflow:hidden">
<div class="a" style="left:0;top:19px;width:292px;height:19px;background:#04395e"></div>
<svg class="a" style="left:3px;top:7px" width="15" height="10" viewBox="0 0 15 10"><path d="M2.5,0.6 H0.8 V9.4 H2.5 M12.5,0.6 H14.2 V9.4 H12.5" fill="none" stroke="#75beff" stroke-width="1.1"/><path d="M3.5,4.5 L8,2.3 L11.5,4 L11.5,6 L7,8.2 L3.5,6.5 Z" fill="#75beff" opacity=".85"/><path d="M3.5,4.5 L7.2,6.2 L11.5,4 M7.2,6.2 V8.2" fill="none" stroke="#1f4f7f" stroke-width=".8"/></svg>
<svg class="a" style="left:4px;top:21.5px" width="14" height="15" viewBox="0 0 14 15"><path d="M7,0.8 L13,4 V11 L7,14.2 L1,11 V4 Z M1,4 L7,7.2 L13,4 M7,7.2 V14.2" fill="none" stroke="#ffffff" stroke-width="1.1" stroke-linejoin="round"/></svg>
<svg class="a" style="left:3px;top:41.5px" width="15" height="15" viewBox="0 0 15 15"><g fill="none" stroke="#ee9d28" stroke-width="1.2"><path d="M1,3.2 L3.2,1 L6.2,4 L4,6.2 Z"/><path d="M9.5,6.5 L11.5,4.5 L14,7 L12,9 Z"/><path d="M9.5,11 L11.5,9 L14,11.5 L12,13.5 Z"/><path d="M5,5.2 V12 H10.2 M5,7.5 H10"/></g></svg>
<div class="a mono" style="left:22px;top:3px;font-size:14px;line-height:19px;color:#d4d4d4;white-space:pre"><span style="color:#18a3ff;font-weight:bold">na</span>vigate</div>
<div class="a mono" style="left:22px;top:22px;font-size:14px;line-height:19px;color:#ffffff;white-space:pre"><span style="color:#18a3ff;font-weight:bold">na</span>vigate_wait</div>
<div class="a mono" style="left:22px;top:41px;font-size:14px;line-height:19px;color:#d4d4d4;white-space:pre"><span style="color:#18a3ff;font-weight:bold">Na</span>meError</div>
</div>
<div class="a" style="left:650px;top:416px;width:332px;height:99px;background:#252526;border:1px solid #454545">
<div class="a mono" style="left:5px;top:5px;font-size:14px;line-height:19px;color:#c6c6c6;white-space:pre">def navigate_wait(x=0, y=0, z=0, ya
w=float('nan'), speed=0.5, frame_id
='', auto_arm=False, tolerance=0.2)</div>
<svg class="a" style="left:315px;top:9px" width="8.5" height="8.5" viewBox="0 0 9 9"><path d="M0.6,0.6 L8.4,8.4 M8.4,0.6 L0.6,8.4" stroke="#c5c5c5" stroke-width="1.1"/></svg>
</div>
<div id="rpanel" class="a">
<div class="a" style="left:0;top:0;width:1px;height:743px;background:#444444"></div>
<div class="a" style="left:1px;top:0;width:528px;height:32px;background:#252526"></div>
<div class="a" style="left:1px;top:0;width:128px;height:32px;background:#1e1e1e"></div>
<span class="a" style="left:8px;top:8px;font-size:13px;line-height:16px;color:#9d9d9d">Task description</span>
<svg class="a" style="left:110.5px;top:12.3px" width="9" height="9" viewBox="0 0 10 10"><path d="M0.8,0.8 L9.2,9.2 M9.2,0.8 L0.8,9.2" stroke="#a8a8a8" stroke-width="1.2"/></svg>
<div class="a" style="left:0;top:32px;width:529px;height:711px;overflow:hidden">
<!-- code block 1 (clipped) -->
<div class="a cb" style="left:77px;top:-60px;width:432px;height:80.5px"></div>
<div class="a cbt" style="left:92px;top:-9.5px"><span style="color:#8b949e">&lt;</span><span style="color:#7ee787">arg</span> <span style="color:#79c0ff">name</span>=<span style="color:#a5d6ff">"aruco_map"</span> <span style="color:#79c0ff">default</span>=<span style="color:#a5d6ff">"true"</span> <span style="color:#8b949e">/&gt;</span></div>
<!-- numbers -->
<div class="ml" style="left:33px;top:33.599999999999994px">6.</div>
<div class="ml" style="left:33px;top:52.599999999999994px">7.</div>
<div class="ml" style="left:33px;top:298.8px">1.</div>
<div class="ml" style="left:33px;top:390.4px">2.</div>
<div class="ml" style="left:33px;top:577.5px">3.</div>
<div class="ml" style="left:10.3px;top:128.6px;font-size:18.5px;line-height:22px;font-weight:bold;color:#e0e0e0">Connect to ros and clover services</div>
<div class="ml" style="margin-top:-32px;left:50.6px;top:65.6px;letter-spacing:-0.073px">Save changes and exit editor.</div>
<div class="ml" style="margin-top:-32px;left:50.6px;top:84.6px;letter-spacing:0.039px">Now, because we changed clover configuration, we need to</div>
<div class="ml" style="margin-top:-32px;left:50.6px;top:103.6px;letter-spacing:0.189px">restart it. To do that press restart button in cloversim WebUI or</div>
<div class="ml" style="margin-top:-32px;left:50.6px;top:122.6px;letter-spacing:-0.130px">cloversim IDE</div>
<div class="ml" style="margin-top:-32px;left:10.3px;top:200.8px;letter-spacing:0.133px">Now with configured aruco map, we can start writing code to solve</div>
<div class="ml" style="margin-top:-32px;left:10.3px;top:219.8px;letter-spacing:0.107px">task. To control drone flight we need to communicate with over ROS</div>
<div class="ml" style="margin-top:-32px;left:10.3px;top:238.9px;letter-spacing:-0.012px">clover node, so we will need to connect to ROS and create clover</div>
<div class="ml" style="margin-top:-32px;left:10.3px;top:257.9px;letter-spacing:0.027px">service proxies (<u style="color:#3794ff;text-decoration-color:#3794ff">read more</u>). We also need to add convience function</div>
<div class="ml" style="margin-top:-32px;left:10.3px;top:276.9px;letter-spacing:0.197px">that will wait untill clover will arrive to its destination (<u style="color:#3794ff;text-decoration-color:#3794ff">read more</u>). So</div>
<div class="ml" style="margin-top:-32px;left:10.3px;top:295.9px;letter-spacing:0.144px">let&#x27;s start.</div>
<div class="ml" style="margin-top:-32px;left:50.6px;top:330.8px;letter-spacing:0.075px">First we need to create file where we are going to write code.</div>
<div class="ml" style="margin-top:-32px;left:50.6px;top:349.8px;letter-spacing:0.055px">Simplest way to do this is to use Cloversim IDE, open it from</div>
<div class="ml" style="margin-top:-32px;left:50.6px;top:368.8px;letter-spacing:0.137px">Cloversim WebUI, open folder (home folder will do fine) and</div>
<div class="ml" style="margin-top:-32px;left:50.6px;top:387.8px;letter-spacing:0.116px">create file named <code>solution.py</code> (or any other name you like)</div>
<div class="ml" style="margin-top:-32px;left:50.6px;top:422.4px;letter-spacing:0.202px">Now import: <code>rospy</code> - communicate with ros; <code>clover.srv</code> and</div>
<div class="ml" style="margin-top:-32px;left:50.6px;top:441.4px;letter-spacing:0.037px"><code>std_srvs.srv</code> - types of different ros services; <code>math</code> - we need</div>
<div class="ml" style="margin-top:-32px;left:50.6px;top:460.4px;letter-spacing:0.074px"><code>math.sqrt</code> to calculate distance between points.</div>
<div class="ml" style="margin-top:-32px;left:50.6px;top:609.5px;letter-spacing:0.042px">Then we need to initialize ros node and create service proxies</div>
<div class="ml" style="margin-top:-32px;left:50.6px;top:628.8px;letter-spacing:-0.018px">for clover services so we can call them (<u style="color:#3794ff;text-decoration-color:#3794ff">read more</u>). We can do</div>
<div class="ml" style="margin-top:-32px;left:50.6px;top:647.5px;letter-spacing:0.151px">this like this:</div>
<!-- code block 2 -->
<div class="a cb" style="left:77px;top:464px;width:432px;height:97.5px"></div>
<div class="a cbt" style="left:91.2px;top:477.9px"><span class="kw">import</span> rospy
<span class="kw">from</span> clover <span class="kw">import</span> srv
<span class="kw">from</span> std_srvs.srv <span class="kw">import</span> Trigger
<span class="kw">import</span> math</div>
<!-- code block 3 -->
<div class="a cb" style="left:77px;top:651.3px;width:432px;height:120px"></div>
<div class="a cbt" style="left:90.7px;top:664.7px">rospy.init_node(<span style="color:#a5d6ff">'flight'</span>)

land = rospy.ServiceProxy(<span style="color:#a5d6ff">'land'</span>, Trigger)</div>
</div>
<div class="a" style="left:519px;top:244px;width:10px;height:126px;background:#424242"></div>
</div>
<div id="ract" class="a"></div>
<svg class="a" style="left:1526px;top:29px" width="46" height="46" viewBox="1526 29 46 46"><g fill="none" stroke="#b8b8b8" stroke-width="1.1" stroke-linejoin="round">
<rect x="1539.7" y="45.4" width="9" height="4.4" transform="rotate(-45 1544.2 47.6)"/>
<rect x="1554" y="50.8" width="6.2" height="3.6" transform="rotate(-45 1557.1 52.6)"/>
<rect x="1554" y="58.1" width="6.2" height="3.6" transform="rotate(-45 1557.1 59.9)"/>
<path d="M1545.6,50.6 V59.7 H1554.3 M1545.6,51.3 H1554.3"/></g></svg>
<div id="bottom" class="a">
<div class="a" style="left:114px;top:-1px;width:164px;height:2px;background:#e7e7e7"></div>
<svg class="a" style="left:8.5px;top:8.7px" width="15" height="14" viewBox="0 0 15 14"><path d="M7.5,1 L14,13 H1 Z" fill="none" stroke="#9d9d9d" stroke-width="1.1" stroke-linejoin="round"/><path d="M7.5,5 V9.3" stroke="#9d9d9d" stroke-width="1.3"/><circle cx="7.5" cy="11" r=".75" fill="#9d9d9d"/></svg>
<span class="a" style="left:31px;top:8px;font-size:13px;line-height:16px;color:#9d9d9d">Problems</span>
<svg class="a" style="left:122.5px;top:8.7px" width="15" height="15" viewBox="0 0 15 15"><rect x="0.6" y="0.6" width="13.6" height="13.2" rx="1" fill="none" stroke="#e7e7e7" stroke-width="1.1"/><path d="M5.5,4 L8.7,7.2 L5.5,10.4" fill="none" stroke="#e7e7e7" stroke-width="1.1"/></svg>
<span class="a" style="left:145px;top:8px;font-size:13px;line-height:16px;color:#e7e7e7">clover@clover0: ~</span>
<svg class="a" style="left:258.5px;top:12.5px" width="10" height="10" viewBox="0 0 10 10"><path d="M0.8,0.8 L9.2,9.2 M9.2,0.8 L0.8,9.2" stroke="#d0d0d0" stroke-width="1.1"/></svg>
<svg class="a" style="left:286.5px;top:8.5px" width="14" height="16" viewBox="0 0 14 16"><path d="M1.6,2 H12.4 V15.3 H1.6 Z" fill="none" stroke="#9d9d9d" stroke-width="1.1"/><path d="M2.5,0.8 V2.5 M4.5,0.8 V2.5 M6.5,0.8 V2.5 M8.5,0.8 V2.5 M10.5,0.8 V2.5" stroke="#9d9d9d" stroke-width=".9"/><path d="M4,6.5 H10 M4,9 H10 M4,11.5 H10" stroke="#9d9d9d" stroke-width="1"/></svg>
<span class="a" style="left:309px;top:8px;font-size:13px;line-height:16px;color:#9d9d9d">Output</span>
<div class="a mono" style="left:7px;top:35px;font-size:14.9px;line-height:18px;white-space:pre;color:#cccccc"><span style="color:#23d18b">clover@clover0</span>:<span style="color:#3b8eea">~</span>$ </div>
<div class="a" style="left:168px;top:37px;width:9px;height:17px;border:1px solid #e5e5e5"></div>
<svg class="a" style="left:1229.5px;top:9.5px" width="14" height="14" viewBox="0 0 14 14"><rect x="0.6" y="0.6" width="12.4" height="12.2" rx="1" fill="none" stroke="#e7e7e7" stroke-width="1.1"/><path d="M6.8,0.6 V12.8" stroke="#e7e7e7" stroke-width="1.1"/></svg>
</div>
<div id="status" class="a">
<svg class="a" style="left:16.5px;top:4px" width="10" height="13" viewBox="0 0 10 13"><path d="M0.6,2.6 Q0.6,0.6 4.8,0.6 Q9,0.6 9,2.6 V10.4 Q9,12.4 4.8,12.4 Q0.6,12.4 0.6,10.4 Z M0.6,3.2 Q4.8,4.6 9,3.2" fill="none" stroke="#fff" stroke-width="1"/></svg>
<span class="a" style="left:31px;top:3px;line-height:16px">PX4-Autopilot</span>
<svg class="a" style="left:117px;top:4px" width="12" height="14" viewBox="0 0 12 14"><circle cx="2.3" cy="2.2" r="1.6" fill="none" stroke="#fff" stroke-width="1"/><circle cx="9.5" cy="4.8" r="1.6" fill="none" stroke="#fff" stroke-width="1"/><circle cx="2.3" cy="11.8" r="1.6" fill="none" stroke="#fff" stroke-width="1"/><path d="M2.3,3.8 V10.2 M9.2,6.4 Q8.5,9 2.6,10.2" fill="none" stroke="#fff" stroke-width="1"/></svg>
<span class="a" style="left:134px;top:3px;line-height:16px">9524e8ec*</span>
<svg class="a" style="left:204px;top:4px" width="13" height="13" viewBox="0 0 13 13"><circle cx="6.3" cy="6.3" r="5.6" fill="none" stroke="#fff" stroke-width="1"/><path d="M4,4 L8.6,8.6 M8.6,4 L4,8.6" stroke="#fff" stroke-width="1"/></svg>
<span class="a" style="left:220.5px;top:3px;line-height:16px">0</span>
<svg class="a" style="left:230.5px;top:4px" width="13" height="13" viewBox="0 0 13 13"><path d="M6.3,1 L12,12 H0.6 Z" fill="none" stroke="#fff" stroke-width="1" stroke-linejoin="round"/><path d="M6.3,4.5 V8.5" stroke="#fff" stroke-width="1.1"/><circle cx="6.3" cy="10" r=".6" fill="#fff"/></svg>
<span class="a" style="left:247px;top:3px;line-height:16px">0</span>
<span class="a" style="left:1190px;top:3px;line-height:16px">3.8.2 64-bit</span>
<span class="a" style="left:1263px;top:3px;line-height:16px;letter-spacing:-0.25px">Ln 40, Col 3</span>
<span class="a" style="left:1337px;top:3px;line-height:16px;letter-spacing:-0.8px">LF</span>
<span class="a" style="left:1361px;top:3px;line-height:16px;letter-spacing:-0.7px">UTF-8</span>
<span class="a" style="left:1404px;top:3px;line-height:16px;letter-spacing:-0.4px">Spaces: 4</span>
<span class="a" style="left:1466px;top:3px;line-height:16px">Python</span>
<svg class="a" style="left:1518px;top:4px" width="12" height="13" viewBox="0 0 12 13"><path d="M6,1 Q2,1 2,5.5 V8.5 L0.8,10.3 H11.2 L10,8.5 V5.5 Q10,1 6,1 Z" fill="none" stroke="#fff" stroke-width="1"/><path d="M4.5,11.5 Q6,13 7.5,11.5" fill="none" stroke="#fff" stroke-width="1"/></svg>
<svg class="a" style="left:1545px;top:5px" width="14" height="12" viewBox="0 0 14 12"><rect x="0.6" y="0.6" width="12.6" height="10.2" fill="none" stroke="#fff" stroke-width="1.1"/><path d="M0.6,3.2 H13.2" stroke="#fff" stroke-width="1.1"/></svg>
</div>
</body></html>
